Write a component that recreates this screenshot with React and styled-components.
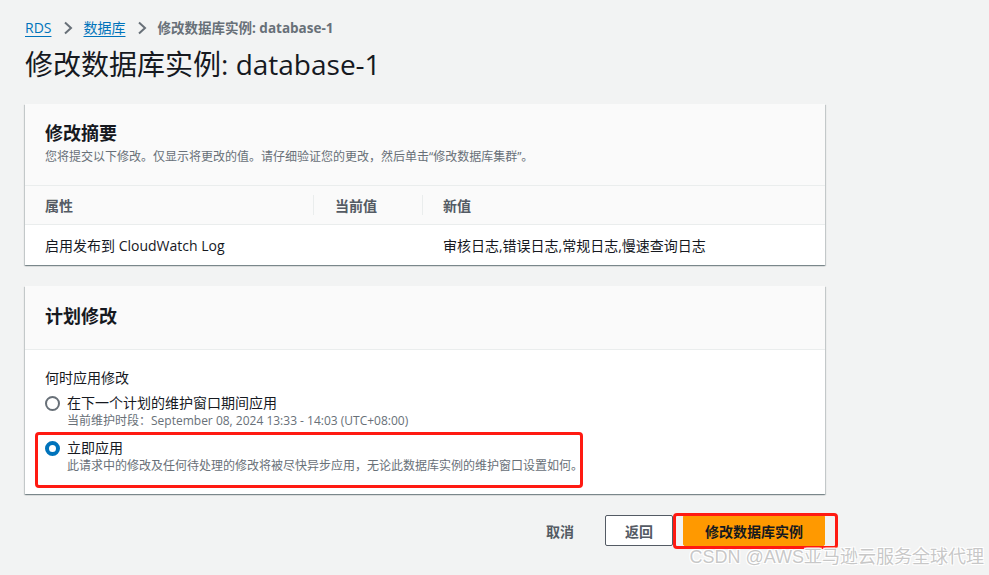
import React from 'react'
import styled, { createGlobalStyle } from 'styled-components'

const GlobalStyle = createGlobalStyle`
  html, body {
    margin: 0;
    padding: 0;
    background: #f2f3f3;
  }
  body {
    font-family: "Open Sans", "Noto Sans CJK SC", sans-serif;
    color: #16191f;
  }
`

const Page = styled.div`
  position: relative;
  width: 989px;
  height: 575px;
  overflow: hidden;
  padding: 18px 0 0 25px;
  box-sizing: border-box;
`

const Crumbs = styled.nav`
  display: flex;
  align-items: center;
  height: 20px;
  font-size: 14px;
  line-height: 20px;
`
const CrumbLink = styled.a`
  color: #0073bb;
  text-decoration: underline;
  text-underline-offset: 3px;
`
const CrumbCurrent = styled.span`
  color: #687078;
  font-weight: 700;
  font-size: 13.5px;
`
const Chevron = styled.svg`
  width: 10px;
  height: 14px;
  margin: 0 10px 0 12px;
`

const Title = styled.h1`
  margin: 8px 0 0;
  font-size: 28px;
  line-height: 36px;
  font-weight: 400;
  color: #16191f;
`

const Card = styled.section`
  width: 800px;
  margin-top: ${p => p.$top || 0}px;
  background: #fff;
  box-shadow: 0 1px 1px 0 rgba(0, 28, 36, 0.3), 1px 1px 1px 0 rgba(0, 28, 36, 0.15),
    -1px 1px 1px 0 rgba(0, 28, 36, 0.15);
`
const CardHeader = styled.div`
  background: #fafafa;
  border-bottom: 1px solid #eaeded;
  padding: ${p => p.$pad || '17px 20px 20px'};
`
const CardTitle = styled.h2`
  margin: 0;
  font-size: 18px;
  line-height: 24px;
  font-weight: 700;
`
const CardDesc = styled.p`
  margin: 4px 0 0;
  font-size: 12px;
  line-height: 16px;
  color: #687078;
`

const Table = styled.div`
  display: grid;
  grid-template-columns: 288px 109px 1fr;
`
const HeadCell = styled.div`
  position: relative;
  height: 38px;
  display: flex;
  align-items: center;
  padding-left: ${p => p.$pad || 20}px;
  background: #fafafa;
  border-bottom: 1px solid #eaeded;
  font-size: 14px;
  font-weight: 700;
  color: #545b64;
  &::before {
    content: '';
    display: ${p => (p.$sep ? 'block' : 'none')};
    position: absolute;
    left: 0;
    top: 9px;
    bottom: 9px;
    width: 1px;
    background: #eaeded;
  }
`
const Cell = styled.div`
  height: 40px;
  display: flex;
  align-items: center;
  padding-left: ${p => p.$pad || 20}px;
  font-size: 14px;
  color: #16191f;
`

const CardBody = styled.div`
  padding: 18px 20px 20px;
`
const FieldLabel = styled.div`
  font-size: 14px;
  line-height: 20px;
`
const RadioList = styled.div`
  display: flex;
  flex-direction: column;
  gap: 9px;
  margin-top: 5px;
`
const Option = styled.label`
  position: relative;
  display: flex;
  gap: 7px;
  align-self: flex-start;
  &::after {
    content: '';
    display: ${p => (p.$marked ? 'block' : 'none')};
    position: absolute;
    left: -10px;
    top: -6px;
    right: 0;
    bottom: -14px;
    border: 3px solid #ff1a12;
    border-radius: 4px;
  }
`
const RadioDot = styled.span`
  width: 15px;
  height: 15px;
  margin-top: 3px;
  box-sizing: border-box;
  border-radius: 50%;
  border: ${p => (p.$on ? '4px solid #0073bb' : '2px solid #687078')};
  background: #fff;
  flex: none;
`
const OptionText = styled.div`
  display: flex;
  flex-direction: column;
`
const OptionLabel = styled.span`
  font-size: 14px;
  line-height: 20px;
`
const OptionHint = styled.span`
  font-size: 12px;
  line-height: 16px;
  color: #687078;
`

const Actions = styled.div`
  width: 800px;
  display: flex;
  justify-content: flex-end;
  align-items: center;
  margin-top: 21px;
`
const Btn = styled.button`
  position: relative;
  height: 31px;
  box-sizing: border-box;
  padding: 0 20px;
  font-family: inherit;
  font-size: 14px;
  font-weight: 700;
  border-radius: 2px;
  cursor: pointer;
  margin-left: ${p => p.$gap || 0}px;
  ${p =>
    p.$variant === 'link' &&
    `background: transparent; border: 1px solid transparent; color: #545b64;`}
  ${p =>
    p.$variant === 'normal' &&
    `background: #fff; border: 1px solid #545b64; color: #545b64; padding: 0 19px;`}
  ${p =>
    p.$variant === 'primary' &&
    `background: #ff9900; border: 1px solid #ff9900; color: #16191f; width: 142px;`}
  &::after {
    content: '';
    display: ${p => (p.$marked ? 'block' : 'none')};
    position: absolute;
    left: -11px;
    top: -3px;
    right: -14px;
    bottom: -4px;
    border: 3px solid #ff1a12;
    border-radius: 4px;
  }
`

const Watermark = styled.div`
  position: absolute;
  right: 5px;
  top: 545px;
  font-family: "Liberation Sans", "Noto Sans CJK SC", sans-serif;
  font-size: 18px;
  line-height: 24px;
  color: rgba(190, 190, 190, 0.85);
  text-shadow: 1px 1px 0 #fff, -1px -1px 0 #fff, 1px -1px 0 #fff, -1px 1px 0 #fff;
  pointer-events: none;
`

function ChevronIcon() {
  return (
    <Chevron viewBox="0 0 10 14">
      <path d="M2 1.5 L8 7 L2 12.5" fill="none" stroke="#687078" strokeWidth="2" />
    </Chevron>
  )
}

export default function App() {
  return (
    <>
      <GlobalStyle />
      <Page>
        <Crumbs>
          <CrumbLink>RDS</CrumbLink>
          <ChevronIcon />
          <CrumbLink>数据库</CrumbLink>
          <ChevronIcon />
          <CrumbCurrent>修改数据库实例: database-1</CrumbCurrent>
        </Crumbs>
        <Title>修改数据库实例: database-1</Title>

        <Card $top={22}>
          <CardHeader>
            <CardTitle>修改摘要</CardTitle>
            <CardDesc>
              您将提交以下修改。仅显示将更改的值。请仔细验证您的更改，然后单击“修改数据库集群”。
            </CardDesc>
          </CardHeader>
          <Table>
            <HeadCell>属性</HeadCell>
            <HeadCell $sep $pad={22}>当前值</HeadCell>
            <HeadCell $sep $pad={21}>新值</HeadCell>
            <Cell>启用发布到 CloudWatch Log</Cell>
            <Cell $pad={22}></Cell>
            <Cell $pad={21}>审核日志,错误日志,常规日志,慢速查询日志</Cell>
          </Table>
        </Card>

        <Card $top={21}>
          <CardHeader $pad="18px 20px 21px">
            <CardTitle>计划修改</CardTitle>
          </CardHeader>
          <CardBody>
            <FieldLabel>何时应用修改</FieldLabel>
            <RadioList>
              <Option>
                <RadioDot />
                <OptionText>
                  <OptionLabel>在下一个计划的维护窗口期间应用</OptionLabel>
                  <OptionHint>当前维护时段：September 08, 2024 13:33 - 14:03 (UTC+08:00)</OptionHint>
                </OptionText>
              </Option>
              <Option $marked>
                <RadioDot $on />
                <OptionText>
                  <OptionLabel>立即应用</OptionLabel>
                  <OptionHint>
                    此请求中的修改及任何待处理的修改将被尽快异步应用，无论此数据库实例的维护窗口设置如何。
                  </OptionHint>
                </OptionText>
              </Option>
            </RadioList>
          </CardBody>
        </Card>

        <Actions>
          <Btn $variant="link">取消</Btn>
          <Btn $variant="normal" $gap={10}>返回</Btn>
          <Btn $variant="primary" $gap={10} $marked>修改数据库实例</Btn>
        </Actions>
        <Watermark>CSDN @AWS亚马逊云服务全球代理</Watermark>
      </Page>
    </>
  )
}
